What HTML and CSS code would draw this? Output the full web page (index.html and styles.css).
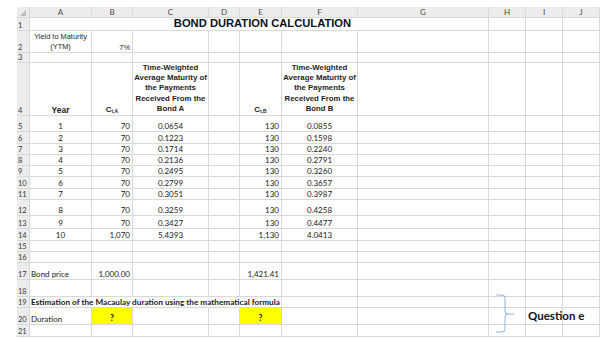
FILE: index.html
```html
<!DOCTYPE html>
<html>
<head>
<meta charset="utf-8">
<link rel="stylesheet" href="styles.css">
</head>
<body>
<div class="page">
  <div class="sheet">
    <!-- column headers -->
    <div class="ch corner"><span class="tri"></span></div>
    <div class="ch">A</div><div class="ch">B</div><div class="ch">C</div><div class="ch">D</div><div class="ch">E</div><div class="ch">F</div><div class="ch">G</div><div class="ch">H</div><div class="ch">I</div><div class="ch">J</div>

    <!-- row 1 -->
    <div class="rh">1</div>
    <div class="x title span7">BOND DURATION CALCULATION</div>
    <div class="x"></div><div class="x"></div><div class="x"></div>

    <!-- row 2 -->
    <div class="rh">2</div>
    <div class="x m arial wrap">Yield to Maturity<br>(YTM)</div>
    <div class="x r arial">7%</div>
    <div class="x"></div><div class="x"></div><div class="x"></div><div class="x"></div><div class="x"></div><div class="x"></div><div class="x"></div><div class="x"></div>

    <!-- row 3 -->
    <div class="rh">3</div>
    <div class="x"></div><div class="x"></div><div class="x"></div><div class="x"></div><div class="x"></div><div class="x"></div><div class="x"></div><div class="x"></div><div class="x"></div><div class="x"></div>

    <!-- row 4 -->
    <div class="rh">4</div>
    <div class="x m hdr year">Year</div>
    <div class="x m hdr">C<sub>t,A</sub></div>
    <div class="x m hdr lines">Time-Weighted<br>Average Maturity of<br>the Payments<br>Received From the<br>Bond A</div>
    <div class="x"></div>
    <div class="x m hdr">C<sub>t,B</sub></div>
    <div class="x m hdr lines">Time-Weighted<br>Average Maturity of<br>the Payments<br>Received From the<br>Bond B</div>
    <div class="x"></div><div class="x"></div><div class="x"></div><div class="x"></div>

    <!-- rows 5-14 -->
    <div class="rh">5</div>
    <div class="x m">1</div><div class="x r">70</div><div class="x m">0.0654</div><div class="x"></div><div class="x r">130</div><div class="x m">0.0855</div>
    <div class="x"></div><div class="x"></div><div class="x"></div><div class="x"></div>

    <div class="rh">6</div>
    <div class="x m">2</div><div class="x r">70</div><div class="x m">0.1223</div><div class="x"></div><div class="x r">130</div><div class="x m">0.1598</div>
    <div class="x"></div><div class="x"></div><div class="x"></div><div class="x"></div>

    <div class="rh">7</div>
    <div class="x m">3</div><div class="x r">70</div><div class="x m">0.1714</div><div class="x"></div><div class="x r">130</div><div class="x m">0.2240</div>
    <div class="x"></div><div class="x"></div><div class="x"></div><div class="x"></div>

    <div class="rh">8</div>
    <div class="x m">4</div><div class="x r">70</div><div class="x m">0.2136</div><div class="x"></div><div class="x r">130</div><div class="x m">0.2791</div>
    <div class="x"></div><div class="x"></div><div class="x"></div><div class="x"></div>

    <div class="rh">9</div>
    <div class="x m">5</div><div class="x r">70</div><div class="x m">0.2495</div><div class="x"></div><div class="x r">130</div><div class="x m">0.3260</div>
    <div class="x"></div><div class="x"></div><div class="x"></div><div class="x"></div>

    <div class="rh">10</div>
    <div class="x m">6</div><div class="x r">70</div><div class="x m">0.2799</div><div class="x"></div><div class="x r">130</div><div class="x m">0.3657</div>
    <div class="x"></div><div class="x"></div><div class="x"></div><div class="x"></div>

    <div class="rh">11</div>
    <div class="x m">7</div><div class="x r">70</div><div class="x m">0.3051</div><div class="x"></div><div class="x r">130</div><div class="x m">0.3987</div>
    <div class="x"></div><div class="x"></div><div class="x"></div><div class="x"></div>

    <div class="rh">12</div>
    <div class="x m">8</div><div class="x r">70</div><div class="x m">0.3259</div><div class="x"></div><div class="x r">130</div><div class="x m">0.4258</div>
    <div class="x"></div><div class="x"></div><div class="x"></div><div class="x"></div>

    <div class="rh">13</div>
    <div class="x m">9</div><div class="x r">70</div><div class="x m">0.3427</div><div class="x"></div><div class="x r">130</div><div class="x m">0.4477</div>
    <div class="x"></div><div class="x"></div><div class="x"></div><div class="x"></div>

    <div class="rh">14</div>
    <div class="x m">10</div><div class="x r">1,070</div><div class="x m">5.4393</div><div class="x"></div><div class="x r">1,130</div><div class="x m">4.0413</div>
    <div class="x"></div><div class="x"></div><div class="x"></div><div class="x"></div>

    <!-- rows 15-16 -->
    <div class="rh">15</div>
    <div class="x"></div><div class="x"></div><div class="x"></div><div class="x"></div><div class="x"></div><div class="x"></div><div class="x"></div><div class="x"></div><div class="x"></div><div class="x"></div>
    <div class="rh">16</div>
    <div class="x"></div><div class="x"></div><div class="x"></div><div class="x"></div><div class="x"></div><div class="x"></div><div class="x"></div><div class="x"></div><div class="x"></div><div class="x"></div>

    <!-- row 17 -->
    <div class="rh">17</div>
    <div class="x l">Bond price</div><div class="x r">1,000.00</div><div class="x"></div><div class="x"></div><div class="x r">1,421.41</div>
    <div class="x"></div><div class="x"></div><div class="x"></div><div class="x"></div><div class="x"></div>

    <!-- row 18 -->
    <div class="rh">18</div>
    <div class="x"></div><div class="x"></div><div class="x"></div><div class="x"></div><div class="x"></div><div class="x"></div><div class="x"></div><div class="x"></div><div class="x"></div><div class="x"></div>

    <!-- row 19 -->
    <div class="rh">19</div>
    <div class="x l bold span5">Estimation of the Macaulay duration using the mathematical formula</div>
    <div class="x"></div><div class="x"></div><div class="x"></div><div class="x"></div><div class="x"></div>

    <!-- row 20 -->
    <div class="rh">20</div>
    <div class="x l">Duration</div><div class="x m q">?</div><div class="x"></div><div class="x"></div><div class="x m q">?</div>
    <div class="x"></div><div class="x"></div><div class="x"></div><div class="x"></div><div class="x"></div>

    <!-- row 21 -->
    <div class="rh">21</div>
    <div class="x"></div><div class="x"></div><div class="x"></div><div class="x"></div><div class="x"></div><div class="x"></div><div class="x"></div><div class="x"></div><div class="x"></div><div class="x"></div>
  </div>

  <svg class="brace" width="24" height="44" viewBox="0 0 24 44">
    <path d="M2 3 H8 Q11 3 11 6 V19 Q11 22 14 22 Q11 22 11 25 V37 Q11 40 8 40 H2" fill="none" stroke="#8db3dd" stroke-width="1"/>
    <path d="M14 22 H20" fill="none" stroke="#8db3dd" stroke-width="1"/>
  </svg>
  <div class="question">Question e</div>
</div>
</body>
</html>
```

FILE: styles.css
```css
html, body {
  margin: 0;
  padding: 0;
  background: #ffffff;
}

.page {
  position: relative;
  width: 610px;
  height: 339px;
  overflow: hidden;
  padding: 7px 0 0 17px;
  box-sizing: border-box;
  background: #ffffff;
}

.sheet {
  display: grid;
  grid-template-columns: 12px 61px 40px 75px 30px 41px 75px 130px 36px 36px 36px;
  grid-template-rows: 10px 12px 21px 9px 52px 15px 11px 10px 10px 10px 11px 10px 15px 12px 11px 10px 10px 16px 16px 10px 16px 11px;
  gap: 1px;
  padding: 0 1px 1px 0;
  width: max-content;
  background: #d9d9d9;
  font-family: Lato, "Open Sans", sans-serif;
  font-size: 8px;
  color: #1a1a1a;
}

.ch {
  background: #ececec;
  color: #4a4a4a;
  display: flex;
  align-items: center;
  justify-content: center;
  font-size: 8px;
  line-height: 1;
}

.corner {
  align-items: flex-end;
  justify-content: flex-end;
}

.tri {
  width: 0;
  height: 0;
  border-left: 6px solid transparent;
  border-bottom: 6px solid #bdbdbd;
  margin: 0 3px 1px 0;
}

.rh {
  background: #ececec;
  color: #3a3a3a;
  display: flex;
  align-items: flex-end;
  font-size: 7.5px;
  line-height: 1;
  padding: 0 0 1px 1px;
  overflow: hidden;
}

.x {
  background: #ffffff;
  display: flex;
  align-items: flex-end;
  white-space: nowrap;
  overflow: hidden;
  line-height: 1;
  padding-bottom: 1px;
  min-width: 0;
}

.m {
  justify-content: center;
  text-align: center;
}

.r {
  justify-content: flex-end;
  padding-right: 2px;
}

.l {
  padding-left: 1px;
}

.bold {
  font-weight: 700;
  font-size: 8.2px;
  overflow: visible;
}

.span7 {
  grid-column: span 7;
}

.span5 {
  grid-column: span 5;
}

.title {
  font-family: "Liberation Sans", Arial, sans-serif;
  font-weight: 700;
  font-size: 11.2px;
  color: #111;
  align-items: center;
  justify-content: center;
  padding: 0 0 0 7px;
}

.arial {
  font-family: "Liberation Sans", Arial, sans-serif;
  font-size: 7.4px;
  color: #1e1e1e;
}

.wrap {
  line-height: 10px;
  padding-bottom: 0;
}

.hdr {
  font-family: "Liberation Sans", Arial, sans-serif;
  font-weight: 700;
  font-size: 7.8px;
  color: #1e1e1e;
}

.hdr sub {
  font-size: 5px;
  vertical-align: -1px;
  line-height: 1;
}

.year {
  font-size: 8.5px;
}

.lines {
  line-height: 10.2px;
  padding-bottom: 1px;
}

.q {
  background: #ffff00;
  font-weight: 700;
  font-size: 8.5px;
  color: #111;
  padding-bottom: 2px;
}

.brace {
  position: absolute;
  left: 494px;
  top: 292px;
}

.question {
  position: absolute;
  left: 528px;
  top: 309px;
  font-family: Lato, "Open Sans", sans-serif;
  font-weight: 700;
  font-size: 11.5px;
  line-height: 14px;
  color: #111;
}
```
